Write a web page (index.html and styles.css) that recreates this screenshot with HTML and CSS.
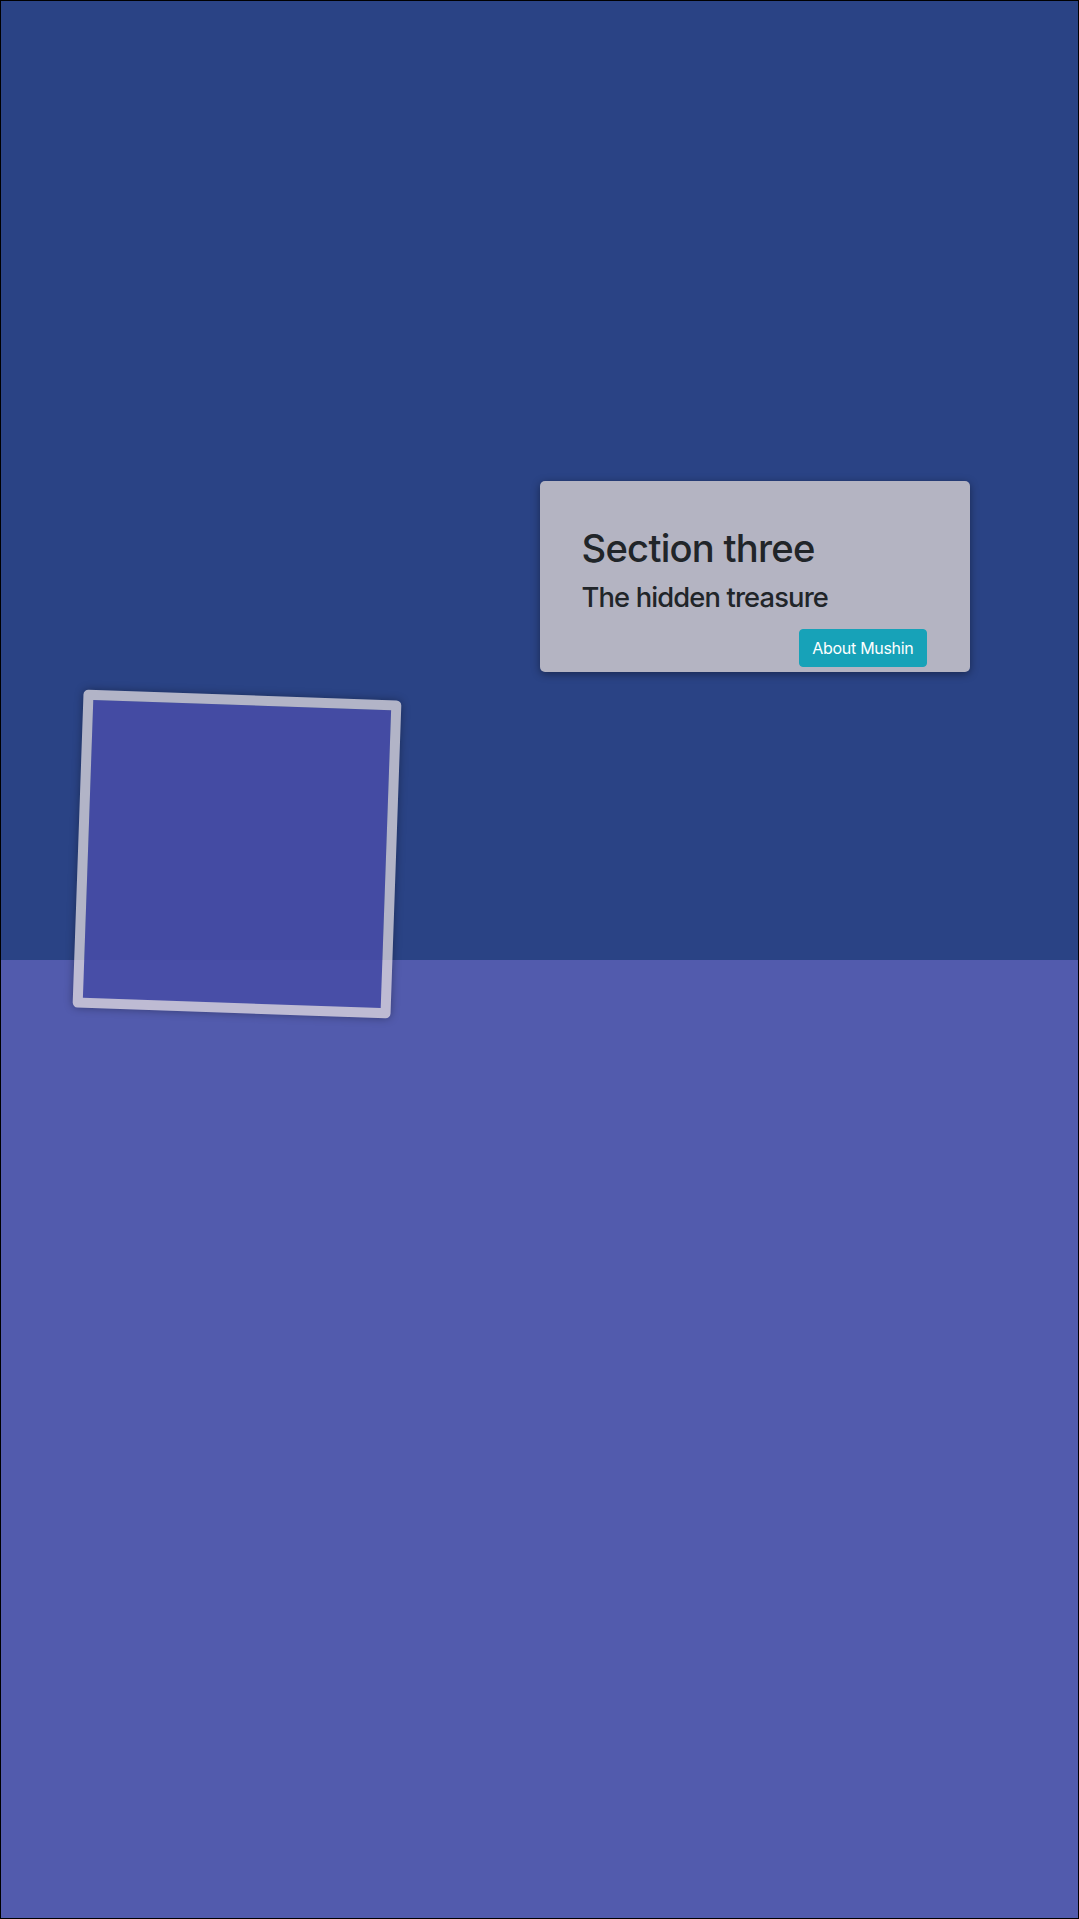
FILE: index.html
```html
<!DOCTYPE html>
<html lang="en">
<head>
<meta charset="utf-8">
<title>Section three</title>
<link rel="stylesheet" href="styles.css">
</head>
<body>
<div class="page">
  <section class="hero">
    <div class="card">
      <h1 class="card-title">Section three</h1>
      <h3 class="card-subtitle">The hidden treasure</h3>
      <div class="card-actions">
        <a class="btn-info" href="#">About Mushin</a>
      </div>
    </div>
  </section>
  <section class="lower"></section>
  <div class="tile"></div>
</div>
</body>
</html>
```

FILE: styles.css
```css
* { box-sizing: border-box; }
html, body { margin: 0; padding: 0; }
body {
  font-family: Inter, "Noto Sans", "Liberation Sans", sans-serif;
  color: #212529;
}
.page {
  position: relative;
  height: 1919px;
  border: 1px solid #000;
  display: flex;
  flex-direction: column;
  overflow: hidden;
}
.hero {
  flex: 1 1 0;
  background: #2a4385;
  display: grid;
  grid-template-columns: 1fr 1fr;
  grid-template-rows: 1fr 1fr;
}
.lower {
  flex: 1 1 0;
  background: #525bad;
}
.card {
  grid-column: 2;
  grid-row: 2;
  align-self: start;
  justify-self: start;
  margin-top: 1px;
  width: 430px;
  height: 191px;
  padding: 45px 43px 5px 42px;
  background: #b4b4c2;
  border-radius: 5px;
  box-shadow: 0 2px 9px rgba(0, 0, 0, 0.4);
}
.card-title {
  margin: 0 0 10px;
  font-size: 38.2px;
  font-weight: 500;
  line-height: 1.2;
  letter-spacing: -0.75px;
}
.card-subtitle {
  margin: 0 0 6px;
  font-size: 27.3px;
  font-weight: 500;
  line-height: 1.2;
  letter-spacing: -0.85px;
}
.card-actions {
  display: flex;
  justify-content: flex-end;
}
.btn-info {
  display: inline-block;
  padding: 6px 12px;
  margin-top: 8px;
  font-size: 16px;
  line-height: 24px;
  letter-spacing: -0.3px;
  color: #fff;
  text-decoration: none;
  background: #17a2b8;
  border: 1px solid #17a2b8;
  border-radius: 4px;
}
.tile {
  position: absolute;
  left: 77px;
  top: 694px;
  width: 318px;
  height: 318px;
  transform: rotate(2deg);
  border: 10px solid rgba(236, 228, 226, 0.7);
  background: rgba(71, 77, 166, 0.9);
  background-clip: padding-box;
  border-radius: 5px;
  box-shadow: 0 0 9px rgba(0, 0, 0, 0.35);
}
```
